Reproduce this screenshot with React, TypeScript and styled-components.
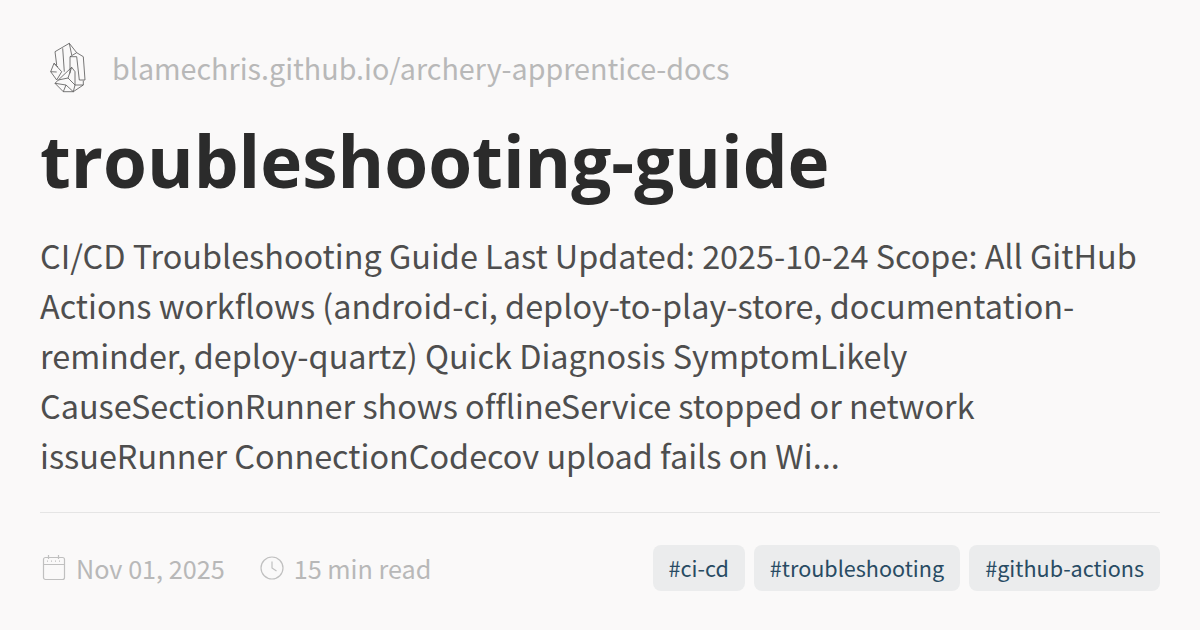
import * as React from 'react'
import styled, { createGlobalStyle } from 'styled-components'

const GlobalStyle = createGlobalStyle`
  html, body {
    margin: 0;
    padding: 0;
    background: #faf9f9;
  }
`

const bodyFont = `"Noto Sans CJK SC", "Noto Sans", sans-serif`

const Card = styled.div`
  width: 1200px;
  height: 630px;
  box-sizing: border-box;
  padding: 38px 40px 0;
  display: flex;
  flex-direction: column;
  background: #faf9f9;
  font-family: ${bodyFont};
  font-variant-ligatures: none;
  overflow: hidden;
`

const Header = styled.div`
  height: 60px;
  display: flex;
  align-items: center;
  gap: 22px;
`

const Site = styled.div`
  font-size: 28.7px;
  color: #b8b8b8;
  line-height: 60px;
`

const Title = styled.h1`
  margin: 16px 0 0;
  font-family: "Open Sans", sans-serif;
  font-size: 71px;
  font-weight: 700;
  line-height: 94px;
  color: #2b2b2b;
`

const Description = styled.p`
  margin: 22px 0 0;
  font-size: 32.4px;
  line-height: 50px;
  color: #4e4e4e;
  height: 250px;
`

const Footer = styled.div`
  margin-top: 32px;
  border-top: 1px solid #e5e5e5;
  padding-top: 32px;
  display: flex;
  align-items: center;
  justify-content: space-between;
`

const Meta = styled.div`
  display: flex;
  align-items: center;
  gap: 35px;
`

const MetaItem = styled.div`
  display: flex;
  align-items: center;
  gap: 10px;
  font-size: 25.2px;
  line-height: 46px;
  color: #b8b8b8;
`

const Tags = styled.div`
  display: flex;
  gap: 9px;
`

const Tag = styled.div`
  padding: 0 16px;
  height: 46px;
  line-height: 46px;
  border-radius: 8px;
  background: #ebeced;
  font-size: 21.6px;
  color: #284b63;
`

const Crystal = () => (
  <svg width="50" height="60" viewBox="0 0 50 60" fill="none" stroke="#555" strokeWidth="0.8" strokeLinejoin="round">
    <path d="M29.3 5.3 L15 13.7 L16.7 27 M22.7 10.3 L24.3 33.7 M29.3 5.3 L31.7 17 M29.3 5.3 L36.7 14.7" />
    <path d="M30 18.7 L36.7 14.7 L43.3 18.7 L45 42 L39.3 42 L36.7 18.7 L30 18.7 L30 35.3" />
    <path d="M14 25.3 L10.7 33.7 L16.7 42 L21.7 33.7 Z M14 25.3 L18 29 M10.7 33.7 L16.7 34" />
    <path d="M18.3 42 L31.7 29.3 L35 33.7 L35 47 M31.7 29.3 L28 40 L35 47 M18.3 42 L28 40" />
    <path d="M15 45.3 L23.3 53.7 L33.3 53.7 L43.3 47 L43.3 42.7 M15 45.3 L18.3 42 M15 45.3 L26 47 L23.3 53.7 M26 47 L33.3 53.7 L35 47 L43.3 47" />
  </svg>
)

const CalendarIcon = () => (
  <svg width="26" height="26" viewBox="0 0 26 26" fill="none" stroke="#c0c0c0" strokeWidth="1.2">
    <rect x="3.5" y="2.5" width="21" height="22" rx="2" />
    <path d="M3.5 9.5h21M8.5 0v4M18.5 0v4" />
    <path d="M7 6.2h14" strokeDasharray="1 3" />
  </svg>
)

const ClockIcon = () => (
  <svg width="24" height="24" viewBox="0 0 24 24" fill="none" stroke="#c0c0c0" strokeWidth="1.2">
    <circle cx="12" cy="12" r="11" />
    <path d="M12 5.5V12l4.5 3" />
  </svg>
)

const tags = ['#ci-cd', '#troubleshooting', '#github-actions']

export default function App() {
  return (
    <Card>
      <GlobalStyle />
      <Header>
        <Crystal />
        <Site>blamechris.github.io/archery-apprentice-docs</Site>
      </Header>
      <Title>troubleshooting-guide</Title>
      <Description>
        CI/CD Troubleshooting Guide Last Updated: 2025-10-24 Scope: All GitHub Actions workflows (android-ci,
        deploy-to-play-store, documentation-reminder, deploy-quartz) Quick Diagnosis SymptomLikely
        CauseSectionRunner shows offlineService stopped or network issueRunner ConnectionCodecov upload fails on
        Wi...
      </Description>
      <Footer>
        <Meta>
          <MetaItem>
            <CalendarIcon />
            Nov 01, 2025
          </MetaItem>
          <MetaItem>
            <ClockIcon />
            15 min read
          </MetaItem>
        </Meta>
        <Tags>
          {tags.map(t => (
            <Tag key={t}>{t}</Tag>
          ))}
        </Tags>
      </Footer>
    </Card>
  )
}
